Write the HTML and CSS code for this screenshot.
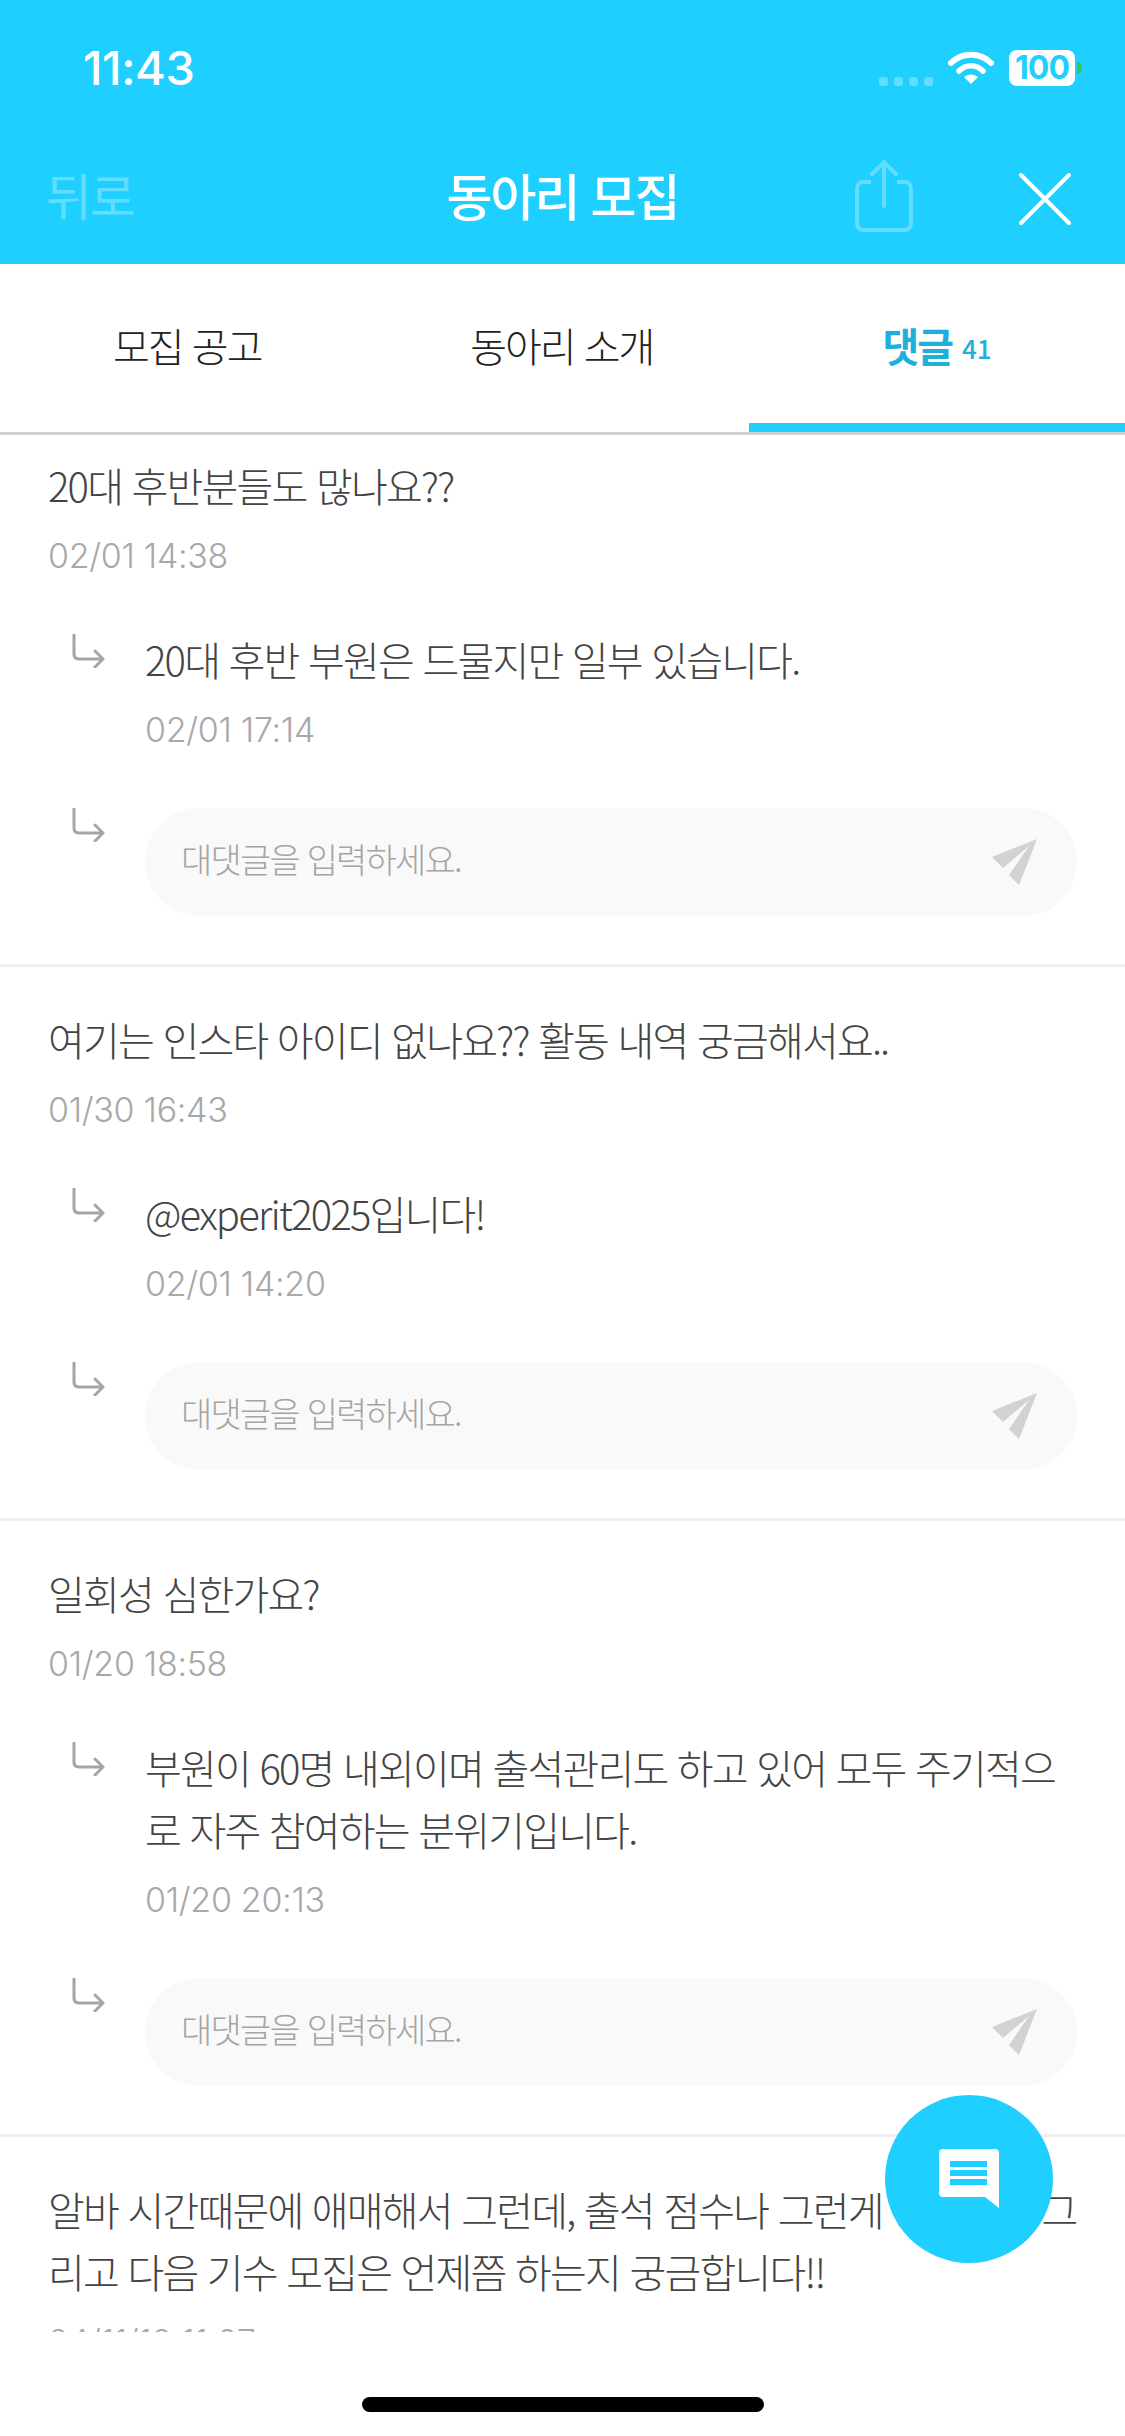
FILE: index.html
```html
<!DOCTYPE html>
<html lang="ko">
  <head>
    <meta charset="UTF-8">
    <title>동아리 모집</title>
    <link rel="stylesheet" href="styles.css">
  </head>
  <body>
    <div class="page">
      <header class="top">
        <div class="status">
          <span class="clock">11:43</span>
          <div class="status-right">
            <div class="signal"><i></i><i></i><i></i><i></i></div>
            <svg class="wifi" width="46" height="34" viewBox="0 0 46 34">
              <path d="M3 12 C14 1 32 1 43 12" fill="none" stroke="#fff" stroke-width="6" stroke-linecap="round"/>
              <path d="M11 20 C18 13 28 13 35 20" fill="none" stroke="#fff" stroke-width="5.5" stroke-linecap="round"/>
              <path d="M23 33 L16 26 C20 22.5 26 22.5 30 26 Z" fill="#fff"/>
            </svg>
            <div class="battery">100</div>
            <span class="battery-tip"></span>
          </div>
        </div>
        <div class="navbar">
          <span class="back">뒤로</span>
          <h1 class="title">동아리 모집</h1>
          <svg class="share" width="58" height="74" viewBox="0 0 58 74">
            <path d="M16 22 H9 Q2 22 2 29 V63 Q2 70 9 70 H49 Q56 70 56 63 V29 Q56 22 49 22 H42" fill="none" stroke="#fff" stroke-width="4"/>
            <path d="M29 46 V3 M17 14 L29 2 L41 14" fill="none" stroke="#fff" stroke-width="4" stroke-linecap="round" stroke-linejoin="round"/>
          </svg>
          <svg class="close" width="52" height="52" viewBox="0 0 52 52">
            <path d="M2 2 L50 50 M50 2 L2 50" stroke="#fff" stroke-width="4" stroke-linecap="round"/>
          </svg>
        </div>
      </header>

      <nav class="tabs">
        <div class="tab">모집 공고</div>
        <div class="tab">동아리 소개</div>
        <div class="tab tab-active">댓글 <small>41</small></div>
      </nav>

      <main class="list">
        <section class="card card-first">
          <p class="text">20대 후반분들도 많나요??</p>
          <p class="date">02/01 14:38</p>
          <div class="reply">
            <svg class="arrow" width="34" height="34" viewBox="0 0 34 34"><path d="M2 1 V20 Q2 25 7 25 H31 M23 17 L31 25 L23 33" fill="none" stroke="#a5a5a5" stroke-width="3" stroke-linecap="round" stroke-linejoin="round"/></svg>
            <div class="reply-body">
              <p class="text">20대 후반 부원은 드물지만 일부 있습니다.</p>
              <p class="date">02/01 17:14</p>
            </div>
          </div>
          <div class="reply reply-input">
            <svg class="arrow" width="34" height="34" viewBox="0 0 34 34"><path d="M2 1 V20 Q2 25 7 25 H31 M23 17 L31 25 L23 33" fill="none" stroke="#a5a5a5" stroke-width="3" stroke-linecap="round" stroke-linejoin="round"/></svg>
            <div class="input">
              <span>대댓글을 입력하세요.</span>
              <svg width="46" height="46" viewBox="0 0 46 46"><path d="M45 0 L0 18 L11 29 L37 7 L17 36 L27 46 Z" fill="#d2d2d2"/></svg>
            </div>
          </div>
        </section>

        <section class="card">
          <p class="text">여기는 인스타 아이디 없나요?? 활동 내역 궁금해서요..</p>
          <p class="date">01/30 16:43</p>
          <div class="reply">
            <svg class="arrow" width="34" height="34" viewBox="0 0 34 34"><path d="M2 1 V20 Q2 25 7 25 H31 M23 17 L31 25 L23 33" fill="none" stroke="#a5a5a5" stroke-width="3" stroke-linecap="round" stroke-linejoin="round"/></svg>
            <div class="reply-body">
              <p class="text">@experit2025입니다!</p>
              <p class="date">02/01 14:20</p>
            </div>
          </div>
          <div class="reply reply-input">
            <svg class="arrow" width="34" height="34" viewBox="0 0 34 34"><path d="M2 1 V20 Q2 25 7 25 H31 M23 17 L31 25 L23 33" fill="none" stroke="#a5a5a5" stroke-width="3" stroke-linecap="round" stroke-linejoin="round"/></svg>
            <div class="input">
              <span>대댓글을 입력하세요.</span>
              <svg width="46" height="46" viewBox="0 0 46 46"><path d="M45 0 L0 18 L11 29 L37 7 L17 36 L27 46 Z" fill="#d2d2d2"/></svg>
            </div>
          </div>
        </section>

        <section class="card">
          <p class="text">일회성 심한가요?</p>
          <p class="date">01/20 18:58</p>
          <div class="reply">
            <svg class="arrow" width="34" height="34" viewBox="0 0 34 34"><path d="M2 1 V20 Q2 25 7 25 H31 M23 17 L31 25 L23 33" fill="none" stroke="#a5a5a5" stroke-width="3" stroke-linecap="round" stroke-linejoin="round"/></svg>
            <div class="reply-body">
              <p class="text">부원이 60명 내외이며 출석관리도 하고 있어 모두 주기적으로 자주 참여하는 분위기입니다.</p>
              <p class="date">01/20 20:13</p>
            </div>
          </div>
          <div class="reply reply-input">
            <svg class="arrow" width="34" height="34" viewBox="0 0 34 34"><path d="M2 1 V20 Q2 25 7 25 H31 M23 17 L31 25 L23 33" fill="none" stroke="#a5a5a5" stroke-width="3" stroke-linecap="round" stroke-linejoin="round"/></svg>
            <div class="input">
              <span>대댓글을 입력하세요.</span>
              <svg width="46" height="46" viewBox="0 0 46 46"><path d="M45 0 L0 18 L11 29 L37 7 L17 36 L27 46 Z" fill="#d2d2d2"/></svg>
            </div>
          </div>
        </section>

        <section class="card">
          <p class="text">알바 시간때문에 애매해서 그런데, 출석 점수나 그런게 중요한지 그리고 다음 기수 모집은 언제쯤 하는지 궁금합니다!!</p>
          <p class="date">24/11/12 11:07</p>
        </section>
      </main>

      <footer class="home-area">
        <div class="home-bar"></div>
      </footer>

      <button class="fab">
        <svg width="60" height="60" viewBox="0 0 60 60">
          <path d="M4 0 H56 Q60 0 60 4 V59 L46 48 H4 Q0 48 0 44 V4 Q0 0 4 0 Z" fill="#fff"/>
          <path d="M11 12 H48 V18 H11 Z M11 21 H48 V27 H11 Z M11 30 H48 V36 H11 Z" fill="#1ecfff"/>
        </svg>
      </button>
    </div>
  </body>
</html>
```

FILE: styles.css
```css
* {
  box-sizing: border-box;
}

html, body {
  margin: 0;
  padding: 0;
}

body {
  font-family: "Noto Sans CJK KR", "Noto Sans", sans-serif;
  background: #fff;
}

p, h1 {
  margin: 0;
}

.page {
  position: relative;
  width: 1125px;
  height: 2436px;
  overflow: hidden;
  display: flex;
  flex-direction: column;
}

/* header */
.top {
  height: 264px;
  background: #1ecfff;
  color: #fff;
  flex: none;
}

.status {
  height: 134px;
  padding: 44px 43px 0 83px;
  display: flex;
  justify-content: space-between;
  align-items: flex-start;
}

.clock {
  font-family: Inter, sans-serif;
  font-size: 47px;
  line-height: 48px;
  font-weight: 500;
  letter-spacing: -0.4px;
}

.status-right {
  display: flex;
  align-items: flex-start;
  padding-top: 6px;
}

.signal {
  display: flex;
  gap: 6px;
  margin-top: 27px;
  margin-right: 15px;
}

.signal i {
  width: 9px;
  height: 9px;
  border-radius: 3px;
  background: rgba(255, 255, 255, 0.3);
}

.wifi {
  margin-right: 15px;
  margin-top: 1px;
}

.battery {
  width: 66px;
  height: 36px;
  border-radius: 8px;
  background: #fff;
  color: #1ecfff;
  font-family: Inter, sans-serif;
  font-size: 32px;
  line-height: 36px;
  font-weight: 700;
  text-align: center;
  letter-spacing: -1px;
}

.battery-tip {
  width: 5px;
  height: 12px;
  margin: 12px 0 0 2px;
  background: #34c759;
  border-radius: 0 6px 6px 0;
}

.navbar {
  height: 130px;
  padding: 0 54px 0 46px;
  display: flex;
  align-items: flex-start;
}

.back {
  width: 401px;
  font-size: 50px;
  line-height: 60px;
  padding-top: 30px;
  opacity: 0.3;
  letter-spacing: -2px;
  box-sizing: content-box;
  height: 60px;
}

.title {
  width: 409px;
  font-size: 50px;
  line-height: 60px;
  padding-top: 30px;
  font-weight: 500;
  letter-spacing: -2px;
}

.share {
  margin-top: 26px;
  opacity: 0.3;
}

.close {
  margin: 39px 0 0 106px;
}

/* tabs */
.tabs {
  height: 171px;
  flex: none;
  display: flex;
  border-bottom: 3px solid #d2d2d2;
}

.tab {
  flex: 1;
  display: flex;
  justify-content: center;
  align-items: center;
  gap: 10px;
  font-size: 40px;
  font-weight: 300;
  letter-spacing: -2px;
  color: #222;
  padding-bottom: 6px;
}

.tab-active {
  flex: 0 0 376px;
  color: #1eb0dc;
  font-weight: 700;
  border-bottom: 9px solid #1ecfff;
  padding: 3px 0 0;
}

.tab-active small {
  font-size: 26px;
  font-weight: 500;
  padding-top: 4px;
  letter-spacing: 0;
}

/* comment list */
.list {
  flex: 1;
  min-height: 0;
  overflow: hidden;
}

.card {
  padding: 41px 48px 48px;
  border-bottom: 3px solid #f0f0f0;
}

.card-first {
  padding-top: 19px;
}

.text {
  font-size: 40px;
  line-height: 62px;
  font-weight: 300;
  color: #444;
  letter-spacing: -1.8px;
  word-break: break-all;
}

.date {
  margin-top: 18px;
  font-family: Inter, sans-serif;
  font-size: 34px;
  line-height: 44px;
  font-weight: 300;
  color: #a8a8a8;
  letter-spacing: -0.3px;
}

.reply {
  margin-top: 56px;
  padding-left: 24px;
  display: flex;
  align-items: flex-start;
  gap: 39px;
}

.reply-input {
  margin-top: 56px;
}

.arrow {
  flex: none;
}

.reply-body {
  flex: 1;
  margin-top: -6px;
}

.input {
  flex: 1;
  height: 108px;
  border-radius: 54px;
  background: #f9f9f9;
  padding: 0 39px 0 36px;
  display: flex;
  justify-content: space-between;
  align-items: center;
  font-size: 34px;
  font-weight: 300;
  color: #a5a5a5;
  letter-spacing: -1.8px;
}

.input span {
  margin-top: -8px;
}

/* bottom */
.home-area {
  height: 104px;
  flex: none;
  background: #fff;
  padding-top: 65px;
}

.home-bar {
  width: 402px;
  height: 15px;
  margin: 0 auto;
  border-radius: 8px;
  background: #000;
}

.fab {
  position: absolute;
  left: 885px;
  top: 2095px;
  width: 168px;
  height: 168px;
  border: none;
  padding: 0;
  border-radius: 50%;
  background: #1ecfff;
  display: flex;
  justify-content: center;
  align-items: center;
}
```
